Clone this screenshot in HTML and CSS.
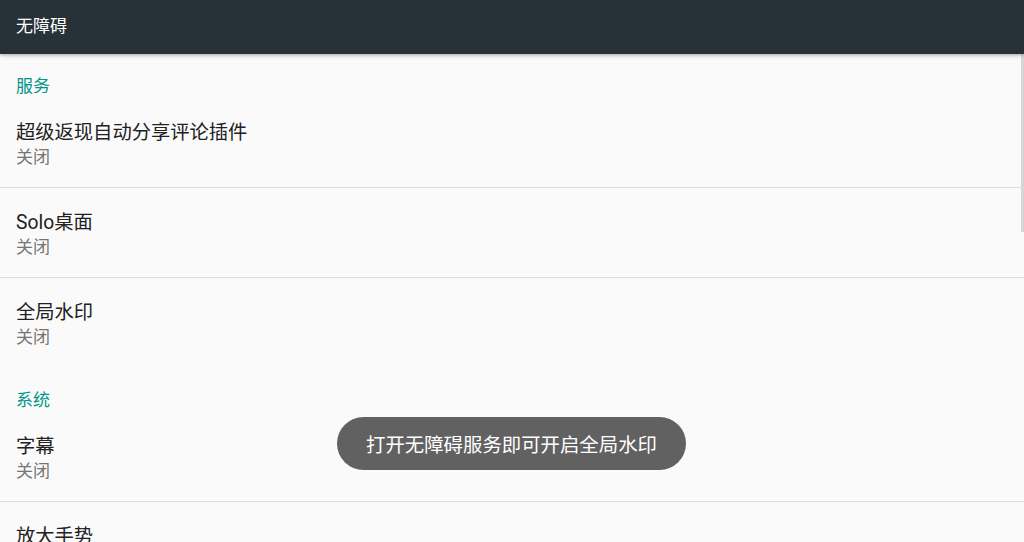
FILE: index.html
```html
<!DOCTYPE html>
<html lang="zh">
<head>
<meta charset="utf-8">
<link rel="stylesheet" href="styles.css">
</head>
<body>
<div class="app">
  <header class="toolbar"><span class="toolbar-title">无障碍</span></header>
  <main class="list">
    <div class="category">服务</div>
    <div class="pref">
      <div class="pref-title">超级返现自动分享评论插件</div>
      <div class="pref-summary">关闭</div>
    </div>
    <div class="divider"></div>
    <div class="pref">
      <div class="pref-title">Solo桌面</div>
      <div class="pref-summary">关闭</div>
    </div>
    <div class="divider"></div>
    <div class="pref pref-last">
      <div class="pref-title">全局水印</div>
      <div class="pref-summary">关闭</div>
    </div>
    <div class="category">系统</div>
    <div class="pref">
      <div class="pref-title">字幕</div>
      <div class="pref-summary">关闭</div>
    </div>
    <div class="divider"></div>
    <div class="pref">
      <div class="pref-title">放大手势</div>
      <div class="pref-summary">关闭</div>
    </div>
  </main>
  <div class="scrollbar"></div>
  <div class="toast">打开无障碍服务即可开启全局水印</div>
</div>
</body>
</html>
```
FILE: styles.css
```css
html, body {
  margin: 0;
  padding: 0;
  background: #fafafa;
  overflow: hidden;
}
body {
  font-family: "Roboto", "Noto Sans CJK SC", sans-serif;
}
.app {
  position: relative;
  width: 1024px;
  height: 542px;
  overflow: hidden;
  background: #fafafa;
}
.toolbar {
  height: 54px;
  background: #263238;
  display: flex;
  align-items: center;
  padding-left: 16px;
  box-shadow: 0 1px 4px rgba(0,0,0,0.35);
  position: relative;
  z-index: 2;
}
.toolbar-title {
  color: #ffffff;
  font-size: 17px;
  line-height: 20px;
  margin-top: -2px;
}
.list {
  display: flex;
  flex-direction: column;
}
.category {
  height: 44px;
  box-sizing: border-box;
  padding: 22px 16px 0;
  color: #009688;
  font-size: 17px;
  line-height: 20px;
  flex-shrink: 0;
}
.pref {
  height: 89px;
  box-sizing: border-box;
  padding: 23px 16px 0;
  display: flex;
  flex-direction: column;
  flex-shrink: 0;
}
.pref-last {
  height: 90px;
}
.pref-title {
  color: #212121;
  font-size: 19.3px;
  line-height: 24px;
}
.pref-summary {
  color: #757575;
  font-size: 17px;
  line-height: 20px;
  margin-top: 2px;
}
.divider {
  height: 1px;
  background: #dcdcdc;
  flex-shrink: 0;
}
.scrollbar {
  position: absolute;
  right: 0;
  top: 54px;
  width: 3px;
  height: 178px;
  background: #d6d6d6;
}
.toast {
  position: absolute;
  left: 337px;
  top: 417px;
  width: 349px;
  height: 53px;
  box-sizing: border-box;
  border-radius: 27px;
  background: #616161;
  color: #ffffff;
  font-size: 19.4px;
  display: flex;
  align-items: center;
  justify-content: center;
}
```
